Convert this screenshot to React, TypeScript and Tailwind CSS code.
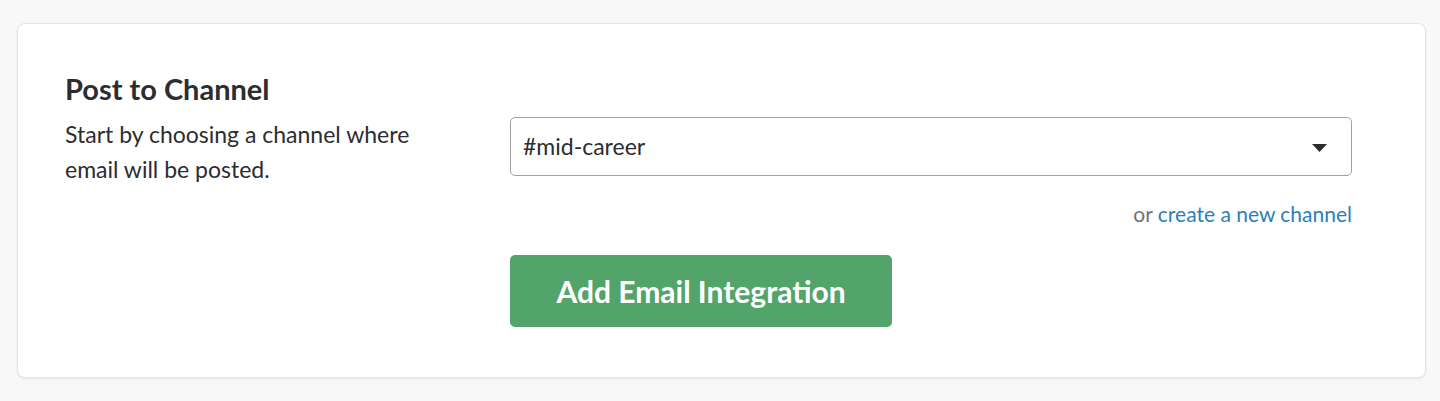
export default function App() {
  return (
    <div className="min-h-[401px] bg-[#f8f8f8] pt-[23px] pl-[17px] pr-[14px] font-['Lato','Noto_Sans',sans-serif]">
      <section className="h-[355px] rounded-lg border border-[#e6e6e6] bg-white pl-[47px] pt-[47px] shadow-[0_1px_2px_rgba(0,0,0,0.08)]">
        <h2 className="text-[29px] leading-[36px] font-bold text-[#2c2d30]">Post to Channel</h2>
        <div className="mt-[10px] flex">
          <p className="w-[445px] pr-[60px] text-[23px] leading-[35px] text-[#2c2d30]">
            Start by choosing a channel where email will be posted.
          </p>
          <div className="flex w-[842px] flex-col">
            <div className="flex h-[59px] items-center justify-between rounded-[5px] border border-[#a0a0a2] bg-white pl-[12px] pr-[24px]">
              <span className="text-[23px] text-[#2c2d30]">#mid-career</span>
              <svg width="15" height="8" viewBox="0 0 15 8" className="mt-[2px]">
                <path d="M0 0 H15 L7.5 8 Z" fill="#2c2d30" />
              </svg>
            </div>
            <p className="mt-[24px] text-right text-[21px] leading-[27px] text-[#717274]">
              or <a className="text-[#2a80b9]">create a new channel</a>
            </p>
            <button className="mt-[28px] h-[72px] w-[382px] rounded-[5px] bg-[#53a46b] text-[30px] font-bold text-white">
              Add Email Integration
            </button>
          </div>
        </div>
      </section>
    </div>
  );
}
